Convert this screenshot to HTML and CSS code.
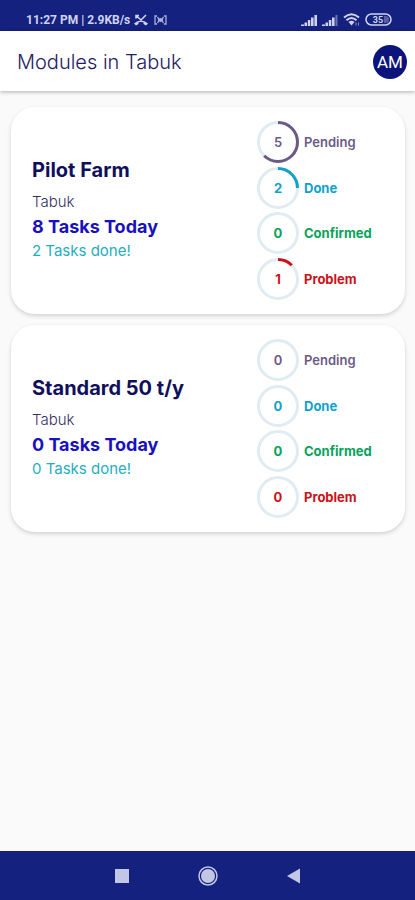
FILE: index.html
```html
<!DOCTYPE html>
<html lang="en">
<head>
<meta charset="utf-8">
<meta name="viewport" content="width=device-width, initial-scale=1">
<title>Modules in Tabuk</title>
<link rel="stylesheet" href="styles.css">
</head>
<body>
<div class="status-bar">
  <div class="status-left">
    <span>11:27 PM | 2.9KB/s</span>
    <svg width="14" height="12" viewBox="0 0 14 12" aria-hidden="true"><path d="M2 1.500 L7 6 L12 1 M2 4.500 V1.500 H5" fill="none" stroke="currentColor" stroke-width="1.600"/><path d="M0 9.500 Q7 3.500 14 9.500 L12 11.500 L9.500 10 V8.300 Q7 7.500 4.500 8.300 V10 L2 11.500Z" fill="currentColor"/></svg>
    <svg class="cast" width="13" height="10" viewBox="0 0 13 10" aria-hidden="true"><path d="M3 1 H1 V9 H3 M10 1 H12 V9 H10 M3.500 2 Q6 5 3.500 8 M9.500 2 Q7 5 9.500 8" fill="none" stroke="currentColor" stroke-width="1.300"/><circle cx="6.500" cy="5" r="2" fill="currentColor"/></svg>
  </div>
  <div class="status-right">
    <svg width="17" height="12" viewBox="0 0 17 12" aria-hidden="true"><path d="M0 10.500h3V12H0zM3.500 8.500h2.500V12H3.500zM6.800 6h2.500v6H6.800zM10 3.500h2.600V12H10zM13.400 1H16v11h-2.600z" fill="currentColor"/></svg>
    <svg width="17" height="12" viewBox="0 0 17 12" aria-hidden="true"><path d="M0 10.500h3V12H0zM3.500 8.500h2.500V12H3.500zM6.800 6h2.500v6H6.800zM10 3.500h2.600V12H10z" fill="currentColor"/><path d="M13.400 1H15.500v11h-2.100z" fill="currentColor" opacity=".45"/></svg>
    <svg class="wifi" width="18" height="13" viewBox="0 0 18 13" aria-hidden="true"><g fill="none" stroke="currentColor" stroke-width="2"><path d="M1 4.500 Q8.500 -2 16 4.500"/><path d="M3.500 7.300 Q8.500 2.800 13.500 7.300"/></g><path d="M5.500 9 Q8.500 6.500 11.500 9 L8.500 12.500Z" fill="currentColor"/><path d="M13 9.500v3M15.500 9.500v3" stroke="currentColor" opacity=".6"/></svg>
    <svg width="27" height="13" viewBox="0 0 27 13" aria-hidden="true"><rect x="1" y="1" width="25" height="11" rx="5.500" fill="none" stroke="currentColor" stroke-width="1.500"/><path d="M19 3h1.500a3.500 3.500 0 0 1 0 7H19z" fill="currentColor" opacity=".35"/><text class="battery-text" x="13" y="10" text-anchor="middle">35</text></svg>
  </div>
</div>
<header class="app-bar">
  <h1>Modules in Tabuk</h1>
  <button class="avatar" type="button" aria-label="Account AM">AM</button>
</header>
<main class="modules">
  <article class="card">
    <div class="info">
      <h2>Pilot Farm</h2>
      <p class="place">Tabuk</p>
      <p class="today">8 Tasks Today</p>
      <p class="finished">2 Tasks done!</p>
    </div>
    <ul class="stats">
      <li class="pending"><svg class="ring" viewBox="0 0 42 42"><circle class="track" cx="21" cy="21" r="19.500"/><circle class="arc" cx="21" cy="21" r="19.500" pathLength="8" stroke-dasharray="5 8"/><text x="21" y="26">5</text></svg><span>Pending</span></li>
      <li class="done"><svg class="ring" viewBox="0 0 42 42"><circle class="track" cx="21" cy="21" r="19.500"/><circle class="arc" cx="21" cy="21" r="19.500" pathLength="8" stroke-dasharray="2 8"/><text x="21" y="26">2</text></svg><span>Done</span></li>
      <li class="confirmed"><svg class="ring" viewBox="0 0 42 42"><circle class="track" cx="21" cy="21" r="19.500"/><text x="21" y="26">0</text></svg><span>Confirmed</span></li>
      <li class="problem"><svg class="ring" viewBox="0 0 42 42"><circle class="track" cx="21" cy="21" r="19.500"/><circle class="arc" cx="21" cy="21" r="19.500" pathLength="8" stroke-dasharray="1 8"/><text x="21" y="26">1</text></svg><span>Problem</span></li>
    </ul>
  </article>
  <article class="card">
    <div class="info">
      <h2>Standard 50 t/y</h2>
      <p class="place">Tabuk</p>
      <p class="today">0 Tasks Today</p>
      <p class="finished">0 Tasks done!</p>
    </div>
    <ul class="stats">
      <li class="pending"><svg class="ring" viewBox="0 0 42 42"><circle class="track" cx="21" cy="21" r="19.500"/><text x="21" y="26">0</text></svg><span>Pending</span></li>
      <li class="done"><svg class="ring" viewBox="0 0 42 42"><circle class="track" cx="21" cy="21" r="19.500"/><text x="21" y="26">0</text></svg><span>Done</span></li>
      <li class="confirmed"><svg class="ring" viewBox="0 0 42 42"><circle class="track" cx="21" cy="21" r="19.500"/><text x="21" y="26">0</text></svg><span>Confirmed</span></li>
      <li class="problem"><svg class="ring" viewBox="0 0 42 42"><circle class="track" cx="21" cy="21" r="19.500"/><text x="21" y="26">0</text></svg><span>Problem</span></li>
    </ul>
  </article>
</main>
<nav class="system-nav">
  <button type="button" aria-label="Recent apps"><svg width="20" height="20" viewBox="0 0 20 20"><rect x="3" y="3" width="14" height="14" fill="currentColor"/></svg></button>
  <button type="button" aria-label="Home"><svg width="20" height="20" viewBox="0 0 20 20"><circle cx="10" cy="10" r="9" fill="none" stroke="currentColor" stroke-width="1.500"/><circle cx="10" cy="10" r="7" fill="currentColor"/></svg></button>
  <button type="button" aria-label="Back"><svg width="20" height="20" viewBox="0 0 20 20"><path d="M3 10 L16 2.500 V17.500Z" fill="currentColor"/></svg></button>
</nav>
</body>
</html>
```
FILE: styles.css
```css
* {
  box-sizing: border-box;
}

body {
  margin: 0;
  min-height: 100vh;
  display: flex;
  flex-direction: column;
  background: #fafafa;
  font-family: Inter, "Liberation Sans", sans-serif;
}

h1, h2, p, ul {
  margin: 0;
  padding: 0;
}

button {
  border: 0;
  padding: 0;
  cursor: pointer;
}

.status-bar {
  display: flex;
  justify-content: space-between;
  align-items: center;
  height: 31px;
  padding: 8px 23px 0 26px;
  background: #14217f;
  color: #d0d3ed;
  font: 700 12px/16px Roboto, sans-serif;
}

.status-left,
.status-right {
  display: flex;
  align-items: center;
  gap: 4px;
}

.cast {
  margin-left: 2px;
  opacity: 0.8;
}

.battery-text {
  font: 700 9px Roboto, sans-serif;
  fill: currentColor;
}

.app-bar {
  display: flex;
  justify-content: space-between;
  align-items: center;
  height: 60px;
  padding: 2px 8px 0 17px;
  background: #fff;
  box-shadow: 0 1px 4px rgba(0, 0, 0, 0.3);
}

.app-bar h1 {
  color: #23205f;
  font-size: 20px;
  font-weight: 300;
  line-height: 24px;
}

.avatar {
  width: 34px;
  height: 34px;
  border-radius: 50%;
  background: #0c137b;
  color: #fff;
  font: 400 17px/34px Roboto, sans-serif;
}

.modules {
  flex: 1;
  display: flex;
  flex-direction: column;
  gap: 11px;
  padding: 16px 10px 16px 11px;
}

.card {
  display: flex;
  min-height: 207px;
  padding: 14px 0 14px 21px;
  border-radius: 24px;
  background: #fff;
  box-shadow: 0 2px 4px rgba(0, 0, 0, 0.16);
}

.info {
  flex: 1;
  align-self: center;
}

.info h2 {
  margin-bottom: 8px;
  color: #100f5c;
  font-size: 20px;
  font-weight: 700;
  line-height: 24px;
}

.place,
.finished {
  font-size: 15px;
  line-height: 24px;
}

.place {
  color: #363063;
  font-weight: 300;
}

.today {
  color: #1811bd;
  font-size: 18px;
  font-weight: 700;
  line-height: 25px;
}

.finished {
  color: #25aebf;
}

.stats {
  width: 148px;
  display: flex;
  flex-direction: column;
  justify-content: space-between;
  list-style: none;
  font-size: 13px;
  font-weight: 700;
}

.stats li {
  display: flex;
  align-items: center;
  gap: 5px;
}

.ring {
  width: 42px;
  height: 42px;
  fill: none;
  stroke-width: 3;
}

.ring text {
  fill: currentColor;
  text-anchor: middle;
}

.track {
  stroke: #e0ebf2;
}

.arc {
  stroke: currentColor;
  transform: rotate(-90deg);
  transform-origin: center;
}

.pending {
  color: #6c5a86;
  font-weight: 600;
}

.done {
  color: #10a2cc;
}

.confirmed {
  color: #07a25a;
}

.problem {
  color: #cc1118;
}

.system-nav {
  display: flex;
  justify-content: center;
  align-items: center;
  gap: 66px;
  height: 49px;
  background: #14217f;
}

.system-nav button {
  display: flex;
  background: none;
  color: #c3c7e6;
}
```
